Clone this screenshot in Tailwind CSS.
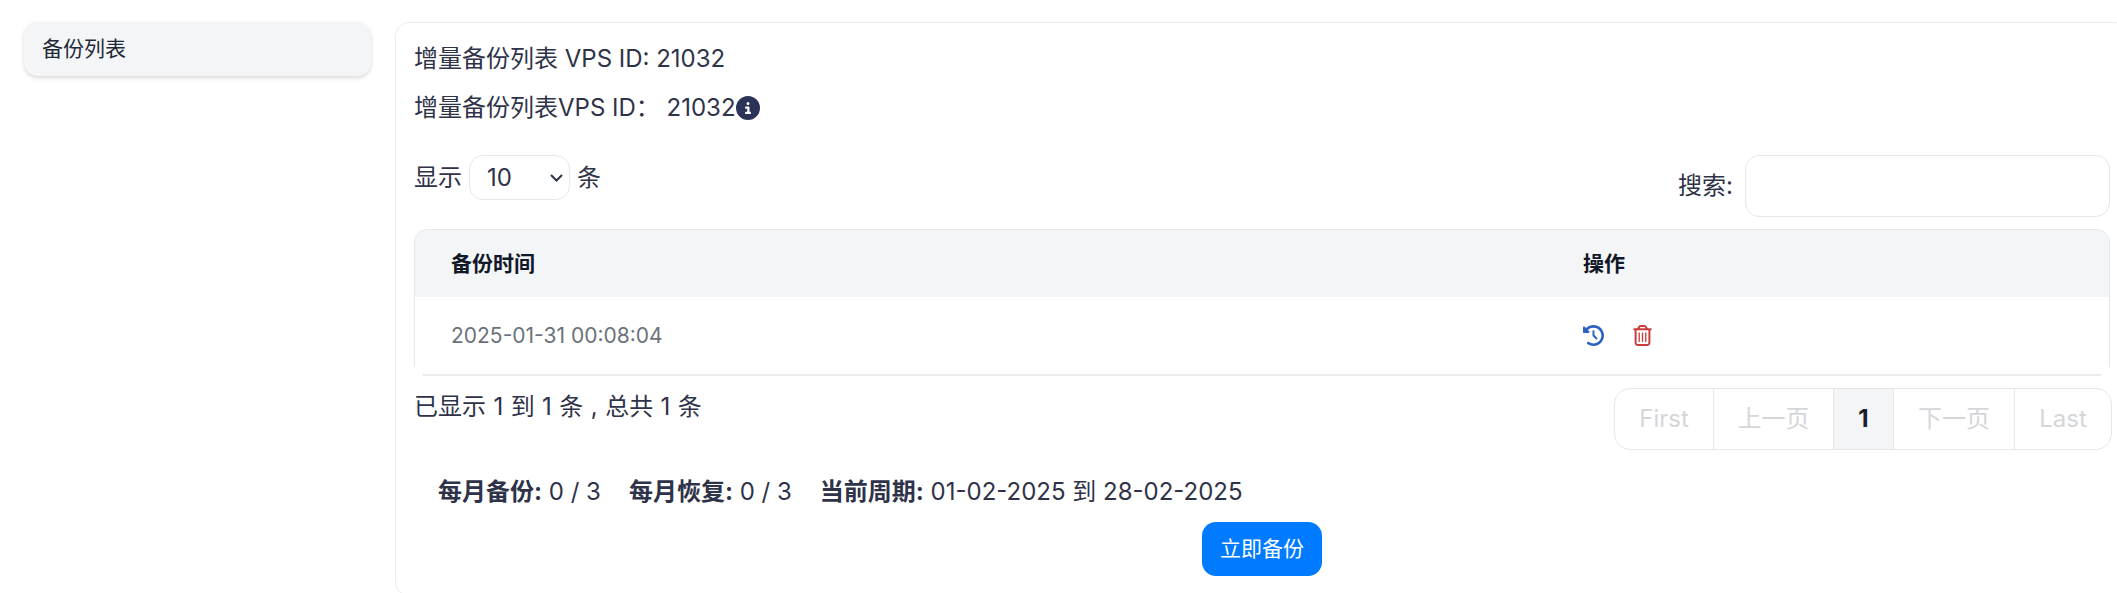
<!DOCTYPE html>
<html lang="zh-CN">
<head>
    <meta charset="UTF-8">
    <title>增量备份列表</title>
    <script src="https://cdn.jsdelivr.net/npm/@tailwindcss/browser@4"></script>
</head>
<body class="bg-white overflow-hidden font-['Inter','Noto_Sans_CJK_SC',sans-serif] text-[#2f3349] text-2xl">
    <div class="flex items-start gap-6 h-[593px] w-[2129px] pl-6 pt-[22px] overflow-hidden">
        <!-- Sidebar -->
        <aside class="w-[347px] shrink-0">
            <a class="flex items-center h-[54px] px-[18px] rounded-[14px] bg-[#f4f5f7] shadow-[0_2px_4px_rgba(0,0,0,0.15)] text-[#1f2937] text-[21px]">备份列表</a>
        </aside>

        <!-- Card -->
        <main class="flex-1 h-[574px] shrink-0 border border-[#e9ebee] rounded-[14px] px-[18px] pt-5">
            <h2 class="h-8 leading-8">增量备份列表 VPS ID: 21032</h2>
            <p class="flex items-center h-8 mt-[17px]">增量备份列表VPS ID：&nbsp;21032
                <svg class="w-6 h-6 fill-[#2b3358]" viewBox="0 0 512 512"><path d="M256 512A256 256 0 1 0 256 0a256 256 0 1 0 0 512zM216 336h24V272H216c-13.3 0-24-10.7-24-24s10.7-24 24-24h48c13.3 0 24 10.7 24 24v88h8c13.3 0 24 10.7 24 24s-10.7 24-24 24H216c-13.3 0-24-10.7-24-24s10.7-24 24-24zm40-208a32 32 0 1 1 0 64 32 32 0 1 1 0-64z"/></svg>
            </p>

            <div class="flex justify-between items-start mt-[31px] h-[74px]">
                <label class="flex items-center gap-[7px]">显示
                    <span class="relative">
                        <select class="block appearance-none w-[101px] h-[45px] pl-[17px] border border-[#e5e7eb] rounded-[14px] bg-white text-2xl">
                            <option>10</option>
                        </select>
                        <svg class="absolute right-[7px] top-[19px] w-[13px] h-2 stroke-[#2f3349] fill-none" stroke-width="2" viewBox="0 0 13 8"><path d="M1 1l5.5 5.5L12 1"/></svg>
                    </span>
                    条</label>
                <label class="flex items-center gap-3">搜索:
                    <input type="text" class="w-[365px] h-[62px] border border-[#e5e7eb] rounded-[14px] bg-white">
                </label>
            </div>

            <div class="h-[138px] border-x border-t border-[#e5e7eb] rounded-t-[14px] overflow-hidden">
                <table class="w-full table-fixed">
                    <thead class="bg-[#f3f5f7] text-[#111827]">
                        <tr class="h-[67px] text-left text-[21px] font-bold">
                            <th class="pl-9 w-[1168px] font-bold">备份时间</th>
                            <th class="font-bold">操作</th>
                        </tr>
                    </thead>
                    <tbody>
                        <tr class="h-[78px]">
                            <td class="pl-9 text-[#6c727c] text-[21px]">2025-01-31 00:08:04</td>
                            <td>
                                <div class="flex items-center gap-[29px] -mt-[2px]">
                                    <svg class="w-[21px] h-[21px] fill-[#2b62c4]" viewBox="0 0 512 512"><path d="M75 75L41 41C25.9 25.9 0 36.6 0 57.9V168c0 13.3 10.7 24 24 24H134.1c21.4 0 32.1-25.9 17-41l-30.8-30.8C155 85.5 203 64 256 64c106 0 192 86 192 192s-86 192-192 192c-40.8 0-78.6-12.7-109.7-34.4c-14.5-10.1-34.4-6.6-44.6 7.9s-6.6 34.4 7.9 44.6C151.2 495 201.7 512 256 512c141.4 0 256-114.6 256-256S397.4 0 256 0C185.3 0 121.3 28.7 75 75zm181 53c-13.3 0-24 10.7-24 24V256c0 6.4 2.5 12.5 7 17l72 72c9.4 9.4 24.6 9.4 33.9 0s9.4-24.6 0-33.9l-65-65V152c0-13.3-10.7-24-24-24z"/></svg>
                                    <svg class="w-[19px] h-[21px] fill-[#cc3b3b]" viewBox="0 0 448 512"><path d="M170.5 51.6L151.5 80h145l-19-28.4c-1.5-2.2-4-3.6-6.7-3.6H177.1c-2.7 0-5.2 1.3-6.7 3.6zm147-26.6L354.2 80H368h48 8c13.3 0 24 10.7 24 24s-10.7 24-24 24h-8V432c0 44.2-35.8 80-80 80H112c-44.2 0-80-35.8-80-80V128H24c-13.3 0-24-10.7-24-24S10.7 80 24 80h8H80 93.8l36.7-55.1C140.9 9.4 158.4 0 177.1 0h93.7c18.7 0 36.2 9.4 46.6 24.9zM80 128V432c0 17.7 14.3 32 32 32H336c17.7 0 32-14.3 32-32V128H80zm80 64V400c0 8.8-7.2 16-16 16s-16-7.2-16-16V192c0-8.8 7.2-16 16-16s16 7.2 16 16zm80 0V400c0 8.8-7.2 16-16 16s-16-7.2-16-16V192c0-8.8 7.2-16 16-16s16 7.2 16 16zm80 0V400c0 8.8-7.2 16-16 16s-16-7.2-16-16V192c0-8.8 7.2-16 16-16s16 7.2 16 16z"/></svg>
                                </div>
                            </td>
                        </tr>
                    </tbody>
                </table>
            </div>
            <div class="h-[2px] mx-[9px] mt-[7px] bg-[#e9ebee]"></div>

            <div class="flex justify-between items-start mt-3">
                <span class="leading-8 mt-[3px] [word-spacing:0.7px]">已显示 1 到 1 条 , 总共 1 条</span>
                <div class="flex h-[62px] -mr-[2px] border border-[#e5e7eb] rounded-[16px] overflow-hidden text-[#d4d6da]">
                    <a class="flex items-center justify-center w-[98px]">First</a>
                    <a class="flex items-center justify-center w-[120px] border-l border-[#e5e7eb]">上一页</a>
                    <a class="flex items-center justify-center w-[60px] border-l border-[#e5e7eb] bg-[#f3f5f7] text-[#1a202c] font-bold">1</a>
                    <a class="flex items-center justify-center w-[121px] border-l border-[#e5e7eb]">下一页</a>
                    <a class="flex items-center justify-center w-[97px] border-l border-[#e5e7eb]">Last</a>
                </div>
            </div>

            <div class="flex gap-7 pl-6 mt-[26px] leading-8">
                <span><b class="font-bold">每月备份:</b> 0 / 3</span>
                <span><b class="font-bold">每月恢复:</b> 0 / 3</span>
                <span><b class="font-bold">当前周期:</b> 01-02-2025 到 28-02-2025</span>
            </div>

            <div class="flex justify-center mt-[14px]">
                <button class="w-[120px] h-[54px] rounded-[14px] bg-[#007bff] text-white text-[21px]">立即备份</button>
            </div>
        </main>
    </div>
</body>
</html>
